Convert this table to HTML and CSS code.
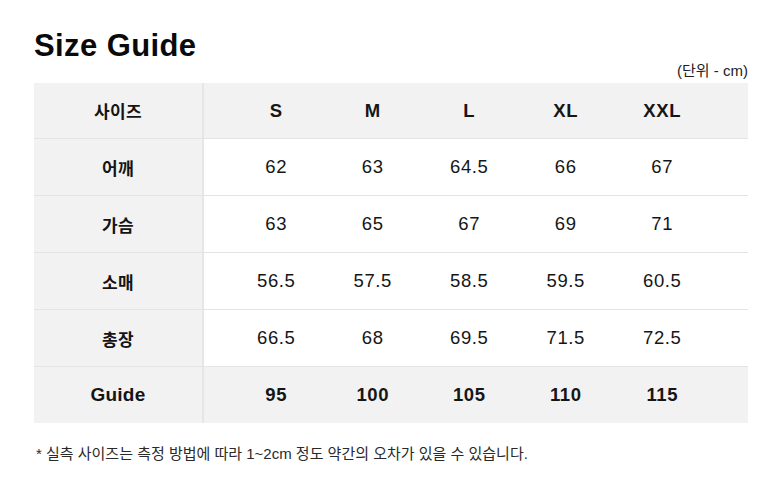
FILE: index.html
```html
<!DOCTYPE html>
<html lang="ko">
<head>
<meta charset="utf-8">
<title>Size Guide</title>
<link rel="stylesheet" href="styles.css">
</head>
<body>
<div class="page">
  <h1 class="title">Size Guide</h1>
  <div class="unit">(단위 - cm)</div>
  <div class="table">
    <div class="row head">
      <div class="label">사이즈</div>
      <div class="cells"><span>S</span><span>M</span><span>L</span><span>XL</span><span>XXL</span></div>
    </div>
    <div class="row">
      <div class="label">어깨</div>
      <div class="cells"><span>62</span><span>63</span><span>64.5</span><span>66</span><span>67</span></div>
    </div>
    <div class="row">
      <div class="label">가슴</div>
      <div class="cells"><span>63</span><span>65</span><span>67</span><span>69</span><span>71</span></div>
    </div>
    <div class="row">
      <div class="label">소매</div>
      <div class="cells"><span>56.5</span><span>57.5</span><span>58.5</span><span>59.5</span><span>60.5</span></div>
    </div>
    <div class="row">
      <div class="label">총장</div>
      <div class="cells"><span>66.5</span><span>68</span><span>69.5</span><span>71.5</span><span>72.5</span></div>
    </div>
    <div class="row guide">
      <div class="label label-latin">Guide</div>
      <div class="cells"><span>95</span><span>100</span><span>105</span><span>110</span><span>115</span></div>
    </div>
  </div>
  <p class="note">* 실측 사이즈는 측정 방법에 따라 1~2cm 정도 약간의 오차가 있을 수 있습니다.</p>
</div>
</body>
</html>
```
FILE: styles.css
```css
html, body {
  margin: 0;
  padding: 0;
  background: #ffffff;
}
body {
  font-family: "Liberation Sans", "Noto Sans CJK KR", Arial, sans-serif;
  color: #111111;
}
.page {
  width: 714px;
  padding: 0 32px 0 34px;
}
.title {
  margin: 0;
  padding-top: 28px;
  font-size: 31px;
  line-height: 36px;
  font-weight: 700;
  letter-spacing: 0.4px;
  color: #0a0a0a;
}
.unit {
  text-align: right;
  font-size: 15px;
  line-height: 18px;
  margin-top: -2px;
  margin-bottom: 3px;
  color: #222222;
}
.row {
  display: grid;
  grid-template-columns: 170px 1fr;
  height: 56px;
  border-top: 1px solid #e4e4e4;
}
.row.head {
  height: 55px;
  border-top: none;
  background: #f2f2f2;
}
.row.guide {
  background: #f2f2f2;
}
.label {
  display: flex;
  align-items: center;
  justify-content: center;
  background: #f2f2f2;
  border-right: 2px solid #e6e6e6;
  font-size: 17px;
  font-weight: 700;
  letter-spacing: 0.3px;
  color: #141414;
}
.label-latin {
  font-size: 19px;
  letter-spacing: 0.2px;
}
.cells {
  display: grid;
  grid-template-columns: repeat(5, 96.5px);
  padding-left: 24px;
  align-items: center;
  font-size: 18.5px;
  letter-spacing: 0.6px;
  color: #161616;
}
.cells span {
  text-align: center;
}
.head .cells,
.guide .cells {
  font-weight: 700;
}
.note {
  margin: 21px 0 0 2px;
  font-size: 15px;
  line-height: 20px;
  color: #2a2a2a;
}
```
